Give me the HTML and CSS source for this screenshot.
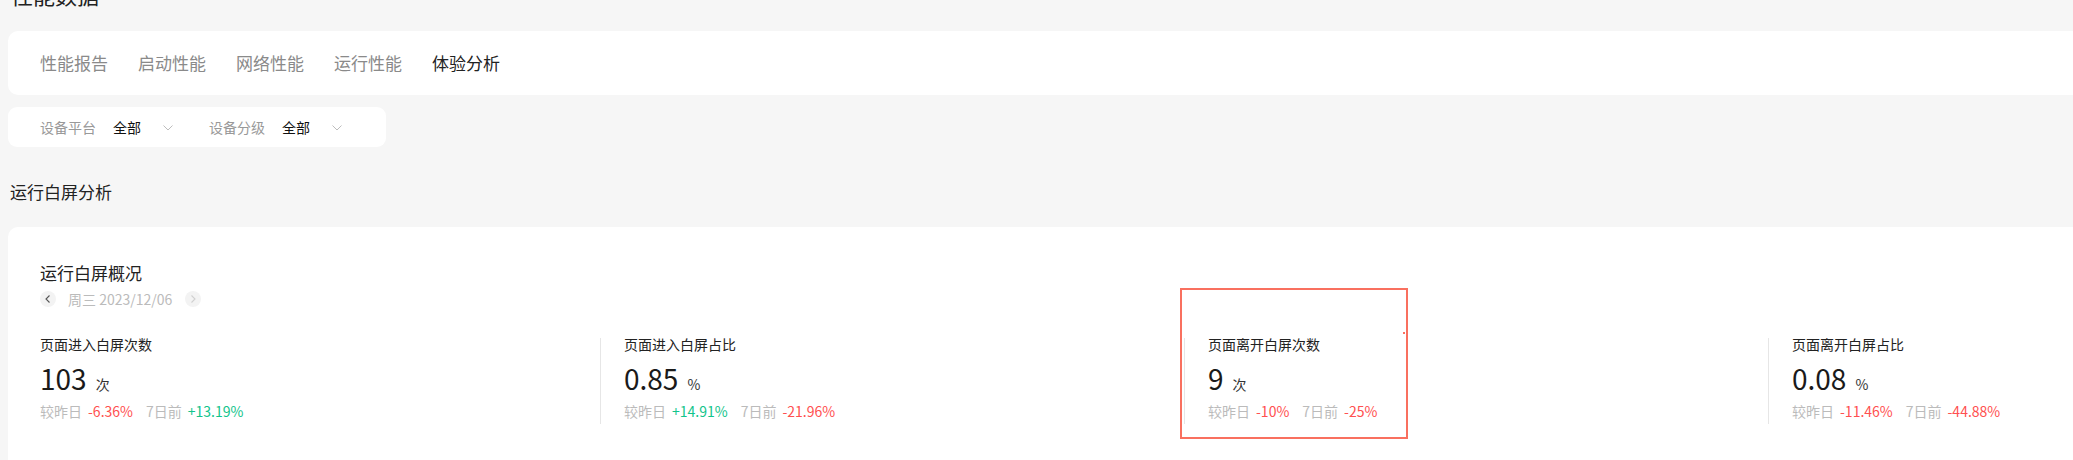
FILE: index.html
```html
<!DOCTYPE html>
<html lang="zh-CN">
<head>
<meta charset="utf-8">
<title>性能数据</title>
<link rel="stylesheet" href="styles.css">
</head>
<body>
<div class="page">
  <h1 class="page-title">性能数据</h1>

  <div class="card tabs">
    <span class="tab">性能报告</span>
    <span class="tab">启动性能</span>
    <span class="tab">网络性能</span>
    <span class="tab">运行性能</span>
    <span class="tab active">体验分析</span>
  </div>

  <div class="card filters">
    <div class="filter">
      <span class="filter-label">设备平台</span>
      <span class="filter-value">全部</span>
      <svg class="chev" width="10" height="6" viewBox="0 0 10 6"><polyline points="0.5,0.5 5,5 9.5,0.5" fill="none" stroke="#bdbdbd" stroke-width="1"/></svg>
    </div>
    <div class="filter">
      <span class="filter-label">设备分级</span>
      <span class="filter-value">全部</span>
      <svg class="chev" width="10" height="6" viewBox="0 0 10 6"><polyline points="0.5,0.5 5,5 9.5,0.5" fill="none" stroke="#bdbdbd" stroke-width="1"/></svg>
    </div>
  </div>

  <h2 class="section-title">运行白屏分析</h2>

  <div class="card overview">
    <div class="overview-title">运行白屏概况</div>
    <div class="date-nav">
      <span class="nav-btn"><svg width="16" height="16" viewBox="0 0 16 16"><polyline points="9.5,4.5 6,8 9.5,11.5" fill="none" stroke="#555" stroke-width="1.1"/></svg></span>
      <span class="date-text">周三 2023/12/06</span>
      <span class="nav-btn"><svg width="16" height="16" viewBox="0 0 16 16"><polyline points="6.5,4.5 10,8 6.5,11.5" fill="none" stroke="#d0d0d0" stroke-width="1.1"/></svg></span>
    </div>

    <div class="metrics">
      <div class="metric">
        <div class="metric-title">页面进入白屏次数</div>
        <div class="metric-value"><span class="num">103</span><span class="unit">次</span></div>
        <div class="metric-compare">
          <span class="cmp"><span class="cmp-label">较昨日</span><span class="down">-6.36%</span></span>
          <span class="cmp"><span class="cmp-label">7日前</span><span class="up">+13.19%</span></span>
        </div>
      </div>
      <div class="metric">
        <div class="metric-title">页面进入白屏占比</div>
        <div class="metric-value"><span class="num">0.85</span><span class="unit">%</span></div>
        <div class="metric-compare">
          <span class="cmp"><span class="cmp-label">较昨日</span><span class="up">+14.91%</span></span>
          <span class="cmp"><span class="cmp-label">7日前</span><span class="down">-21.96%</span></span>
        </div>
      </div>
      <div class="metric highlighted">
        <div class="metric-title">页面离开白屏次数</div>
        <div class="metric-value"><span class="num">9</span><span class="unit">次</span></div>
        <div class="metric-compare">
          <span class="cmp"><span class="cmp-label">较昨日</span><span class="down">-10%</span></span>
          <span class="cmp"><span class="cmp-label">7日前</span><span class="down">-25%</span></span>
        </div>
        <span class="mark-box"></span>
        <span class="mark-dot"></span>
      </div>
      <div class="metric">
        <div class="metric-title">页面离开白屏占比</div>
        <div class="metric-value"><span class="num">0.08</span><span class="unit">%</span></div>
        <div class="metric-compare">
          <span class="cmp"><span class="cmp-label">较昨日</span><span class="down">-11.46%</span></span>
          <span class="cmp"><span class="cmp-label">7日前</span><span class="down">-44.88%</span></span>
        </div>
      </div>
    </div>
  </div>
</div>
</body>
</html>
```

FILE: styles.css
```css
html, body {
  margin: 0;
  padding: 0;
  background: #f6f6f6;
  overflow: hidden;
}

body {
  font-family: "Noto Sans CJK SC", "Noto Sans", sans-serif;
  color: #222;
}

.page {
  width: 2400px;
  padding-left: 8px;
  padding-bottom: 40px;
}

.page-title {
  margin: -21px 0 0 3px;
  font-size: 22px;
  line-height: 30px;
  font-weight: 400;
  color: #222;
}

.card {
  background: #fff;
  border-radius: 10px;
}

.tabs {
  margin-top: 22px;
  height: 64px;
  display: flex;
  align-items: center;
  gap: 30px;
  padding-left: 32px;
}

.tab {
  font-size: 17px;
  line-height: 24px;
  color: #8a8a8a;
}

.tab.active {
  color: #222;
}

.filters {
  margin-top: 12px;
  width: 378px;
  height: 40px;
  box-sizing: border-box;
  border-radius: 9px;
  display: flex;
  align-items: center;
  padding-left: 32px;
  gap: 36px;
}

.filter {
  display: flex;
  align-items: center;
}

.filter-label {
  font-size: 14px;
  line-height: 20px;
  color: #999;
}

.filter-value {
  font-size: 14px;
  line-height: 20px;
  color: #111;
  margin-left: 17px;
}

.chev {
  margin-left: 22px;
  margin-top: 1px;
}

.section-title {
  margin: 33px 0 23px 2px;
  font-size: 17px;
  line-height: 24px;
  font-weight: 400;
  color: #222;
}

.overview {
  padding: 34px 32px 60px;
  border-radius: 10px 0 0 0;
}

.overview-title {
  font-size: 17px;
  line-height: 24px;
  color: #222;
}

.date-nav {
  margin-top: 6px;
  display: flex;
  align-items: center;
  height: 16px;
}

.nav-btn {
  width: 16px;
  height: 16px;
  border-radius: 50%;
  background: #f3f3f3;
  display: flex;
}

.date-text {
  margin: 0 13px 0 12px;
  font-size: 14px;
  line-height: 16px;
  color: #bbb;
}

.metrics {
  margin-top: 31px;
  display: grid;
  grid-template-columns: 560px 584px 584px 584px;
}

.metric {
  position: relative;
  border-left: 1px solid #e6e6e6;
  padding-left: 23px;
  padding-bottom: 3px;
}

.metric:first-child {
  border-left: none;
  padding-left: 0;
}

.metric-title {
  font-size: 14px;
  line-height: 12px;
  color: #222;
}

.metric-value {
  margin-top: 10px;
  display: flex;
  align-items: baseline;
  line-height: 36px;
}

.num {
  font-size: 28px;
  color: #1a1a1a;
}

.unit {
  margin-left: 9px;
  font-size: 14px;
  color: #333;
}

.metric-compare {
  margin-top: -1px;
  font-size: 14px;
  line-height: 20px;
  display: flex;
  gap: 13px;
}

.cmp-label {
  color: #bbb;
  margin-right: 6px;
}

.down {
  color: #ff5050;
}

.up {
  color: #12c48b;
}

.mark-box {
  position: absolute;
  left: -5px;
  top: -50px;
  width: 228px;
  height: 151px;
  box-sizing: border-box;
  border: 2px solid #f9705f;
  pointer-events: none;
}

.mark-dot {
  position: absolute;
  left: 218px;
  top: -6px;
  width: 2px;
  height: 2px;
  background: #f9705f;
}
```
